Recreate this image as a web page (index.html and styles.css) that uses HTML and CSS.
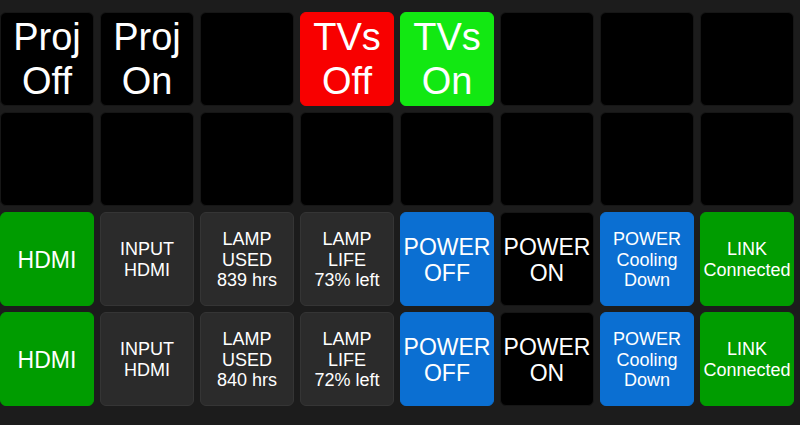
FILE: index.html
```html
<!DOCTYPE html>
<html lang="en">
<head>
    <meta charset="UTF-8">
    <meta name="viewport" content="width=device-width, initial-scale=1.0">
    <title>Projector Control</title>
    <link rel="stylesheet" href="styles.css">
</head>
<body>
    <div class="panel">
        <!-- row 1: macros -->
        <button class="key big">Proj<br>Off</button>
        <button class="key big">Proj<br>On</button>
        <button class="key"></button>
        <button class="key big red">TVs<br>Off</button>
        <button class="key big lime">TVs<br>On</button>
        <button class="key"></button>
        <button class="key"></button>
        <button class="key"></button>

        <!-- row 2: empty -->
        <button class="key"></button>
        <button class="key"></button>
        <button class="key"></button>
        <button class="key"></button>
        <button class="key"></button>
        <button class="key"></button>
        <button class="key"></button>
        <button class="key"></button>

        <!-- row 3: projector 1 -->
        <button class="key mid green">HDMI</button>
        <button class="key info">INPUT<br>HDMI</button>
        <button class="key info">LAMP<br>USED<br>839 hrs</button>
        <button class="key info">LAMP<br>LIFE<br>73% left</button>
        <button class="key power blue">POWER<br>OFF</button>
        <button class="key power">POWER<br>ON</button>
        <button class="key info blue">POWER<br>Cooling<br>Down</button>
        <button class="key info green">LINK<br>Connected</button>

        <!-- row 4: projector 2 -->
        <button class="key mid green">HDMI</button>
        <button class="key info">INPUT<br>HDMI</button>
        <button class="key info">LAMP<br>USED<br>840 hrs</button>
        <button class="key info">LAMP<br>LIFE<br>72% left</button>
        <button class="key power blue">POWER<br>OFF</button>
        <button class="key power">POWER<br>ON</button>
        <button class="key info blue">POWER<br>Cooling<br>Down</button>
        <button class="key info green">LINK<br>Connected</button>
    </div>
</body>
</html>
```

FILE: styles.css
```css
body {
    margin: 0;
    background-color: #1c1c1c;
    font-family: "Liberation Sans", Arial, sans-serif;
}

.panel {
    display: grid;
    grid-template-columns: repeat(8, 94px);
    grid-auto-rows: 94px;
    gap: 6px;
    padding-top: 12px;
}

.key {
    display: flex;
    align-items: center;
    justify-content: center;
    padding: 2px 0 0;
    border: 1px solid #161616;
    border-radius: 6px;
    background-color: #000;
    color: #fff;
    font-family: inherit;
    font-size: 18px;
    line-height: 1.15;
    text-align: center;
}

.big {
    font-size: 38px;
}

.mid {
    font-size: 23px;
}

.power {
    font-size: 23px;
}

.info {
    background-color: #2b2b2b;
    border-color: #353535;
}

.red {
    background-color: #f80000;
    border-color: #f80000;
}

.lime {
    background-color: #12e812;
    border-color: #12e812;
}

.green {
    background-color: #009c00;
    border-color: #009c00;
}

.blue {
    background-color: #0b6fd2;
    border-color: #0b6fd2;
}
```
